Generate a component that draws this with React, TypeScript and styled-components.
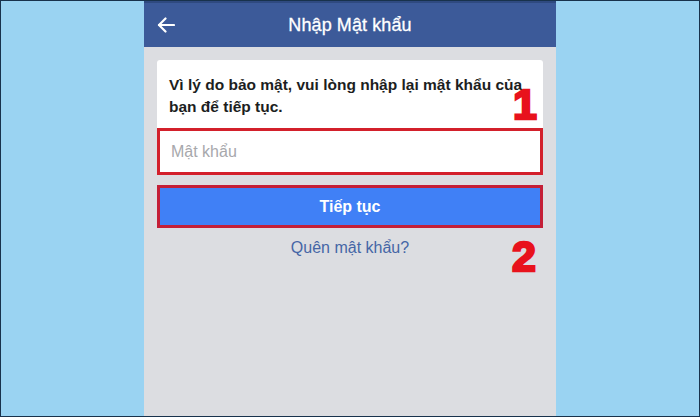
import React from "react";
import styled, { createGlobalStyle } from "styled-components";

const GlobalStyle = createGlobalStyle`
  html, body { margin: 0; padding: 0; }
  body { font-family: "Liberation Sans", Arial, sans-serif; }
  * { box-sizing: border-box; }
`;

const Page = styled.div`
  width: 700px;
  height: 417px;
  border: 1px solid #18324c;
  background: #9ad3f2;
  display: flex;
  justify-content: center;
  overflow: hidden;
`;

const Screen = styled.div`
  position: relative;
  width: 412px;
  height: 100%;
  background: #dcdde1;
  display: flex;
  flex-direction: column;
`;

const Header = styled.header`
  height: 46px;
  flex: none;
  background: #3c5a99;
  border-top: 2px solid #2f4a80;
  display: grid;
  grid-template-columns: 46px 1fr 46px;
  align-items: center;
`;

const BackButton = styled.div`
  display: flex;
  align-items: center;
  padding-left: 13px;
  height: 100%;
`;

const Title = styled.h1`
  margin: 0;
  text-align: center;
  color: #ffffff;
  font-size: 18px;
  font-weight: 400;
  letter-spacing: 0.1px;
  -webkit-text-stroke: 0.3px #ffffff;
`;

const Body = styled.main`
  padding: 13px 13px 0;
  display: flex;
  flex-direction: column;
`;

const Card = styled.section`
  background: #ffffff;
  border-radius: 3px 3px 0 0;
  display: flex;
  flex-direction: column;
`;

const Prompt = styled.p`
  margin: 0;
  padding: 14px 12px 10px;
  font-size: 15.5px;
  line-height: 22px;
  font-weight: 700;
  color: #1c1e21;
`;

const PasswordField = styled.div`
  height: 47px;
  border: 3px solid #d3202b;
  background: #ffffff;
  display: flex;
  align-items: center;
  padding-left: 11px;
  color: #a7a8ac;
  font-size: 16px;
`;

const SubmitButton = styled.div`
  margin-top: 10px;
  height: 43px;
  border: 3px solid #c41f37;
  background: #4080f6;
  color: #ffffff;
  font-weight: 700;
  font-size: 16px;
  display: flex;
  align-items: center;
  justify-content: center;
`;

const ForgotLink = styled.div`
  margin-top: 10px;
  text-align: center;
  line-height: 20px;
  font-size: 16px;
  color: #4566a6;
`;

const Marker = styled.span<{ $top: number; $left: number }>`
  position: absolute;
  top: ${(p) => p.$top}px;
  left: ${(p) => p.$left}px;
  font-family: "Liberation Sans", Arial, sans-serif;
  font-weight: 700;
  font-size: 43px;
  line-height: 1;
  color: #e8121c;
  -webkit-text-stroke: 2.5px #e8121c;
`;

export default function App() {
  return (
    <>
      <GlobalStyle />
      <Page>
        <Screen>
          <Header>
            <BackButton>
              <svg width="18" height="16" viewBox="0 0 18 16" fill="none" stroke="#ffffff" strokeWidth="2.2" strokeLinecap="round" strokeLinejoin="round">
                <line x1="2" y1="8" x2="17" y2="8" />
                <polyline points="8.5,1.5 2,8 8.5,14.5" />
              </svg>
            </BackButton>
            <Title>Nhập Mật khẩu</Title>
            <div />
          </Header>
          <Body>
            <Card>
              <Prompt>Vì lý do bảo mật, vui lòng nhập lại mật khẩu của bạn để tiếp tục.</Prompt>
              <PasswordField>Mật khẩu</PasswordField>
            </Card>
            <SubmitButton>Tiếp tục</SubmitButton>
            <ForgotLink>Quên mật khẩu?</ForgotLink>
          </Body>
          <Marker $top={82} $left={369}>1</Marker>
          <Marker $top={234} $left={368}>2</Marker>
        </Screen>
      </Page>
    </>
  );
}
